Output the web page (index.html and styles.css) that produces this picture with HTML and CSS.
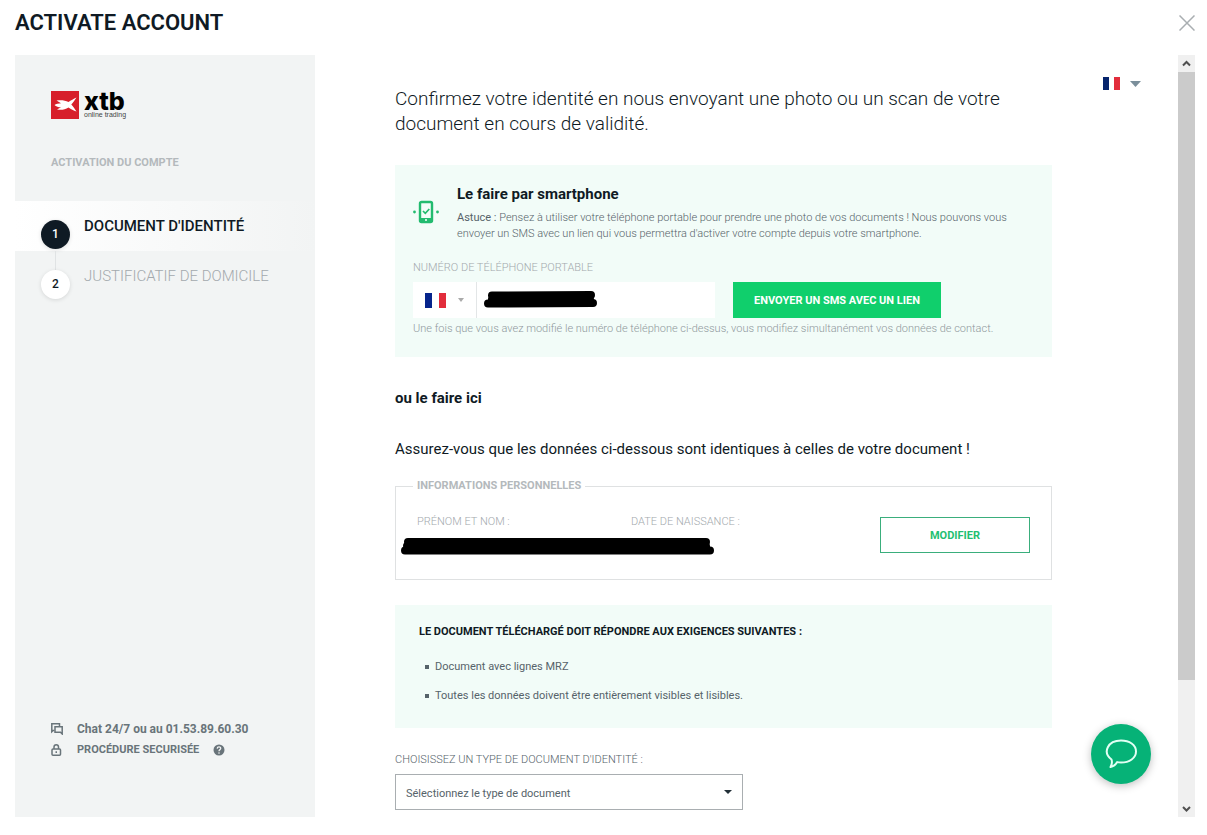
FILE: index.html
```html
<!DOCTYPE html>
<html lang="fr">
<head>
  <meta charset="UTF-8" />
  <meta name="viewport" content="width=device-width, initial-scale=1.0"/>
  <title>Activate account</title>
  <link rel="stylesheet" href="styles.css">
</head>
<body>
  <header class="top">
    <h1>ACTIVATE ACCOUNT</h1>
    <button type="button" class="close" aria-label="Fermer">
      <svg width="16" height="16" viewBox="0 0 16 16"><path d="M.5.5l15 15M15.5.5l-15 15" stroke="#a9aeb1" stroke-width="1.5" fill="none"/></svg>
    </button>
  </header>

  <div class="layout">
    <aside class="sidebar">
      <div class="logo">
        <svg width="28" height="28" viewBox="0 0 28 28">
          <rect width="28" height="28" fill="#d71f2b"/>
          <path d="M5.500 9.500C10 8.800 14 9.200 17.500 11C20 9.500 22.500 7.800 25.500 6.500C24 9 22 11.500 20.300 13.500C22 15.500 24 18 25.500 20.500C22.500 19.500 20 18.200 17.500 16.500C14 18.800 10 19.300 6 18.500L10 16.300C7.500 16.300 5 15.500 3.500 14C5 13 7.500 12.300 10 12.200Z" fill="#fff"/>
        </svg>
        <div class="logo-text">
          <strong>xtb</strong>
          <span>online trading</span>
        </div>
      </div>
      <h2 class="side-title">ACTIVATION DU COMPTE</h2>

      <ol class="steps">
        <li class="step active"><span class="num">1</span><span class="step-name">DOCUMENT D'IDENTITÉ</span></li>
        <li class="step"><span class="num">2</span><span class="step-name">JUSTIFICATIF DE DOMICILE</span></li>
      </ol>

      <div class="help">
        <p class="help-chat">
          <svg width="12" height="12" viewBox="0 0 12 12" fill="none" stroke="#69747a" stroke-width="1.500"><path d="M3.500 7.500H2L.8 8.700V.8H8.500V3"/><path d="M4 3.700H11.200V11L9.500 9.300H4Z"/></svg>
          <span>Chat 24/7 ou au 01.53.89.60.30</span>
        </p>
        <p>
          <svg width="12" height="12" viewBox="0 0 12 12" fill="none" stroke="#69747a" stroke-width="1.500"><rect x="1" y="5" width="8.500" height="6.200" rx="1"/><path d="M3 5V3a2.250 2.250 0 0 1 4.500 0V5"/><path d="M5.250 7.300V9"/></svg>
          <span>PROCÉDURE SECURISÉE</span>
          <svg width="12" height="12" viewBox="0 0 12 12"><circle cx="6" cy="6" r="5.500" fill="#69747a"/><path d="M4.200 4.600C4.300 2.300 7.900 2.500 7.700 4.500C7.600 5.700 6 5.600 6 7.200" fill="none" stroke="#f2f4f4" stroke-width="1.300"/><circle cx="6" cy="9" r=".8" fill="#f2f4f4"/></svg>
        </p>
      </div>
    </aside>

    <main class="content">
      <form class="form">
        <p class="intro">Confirmez votre identité en nous envoyant une photo ou un scan de votre document en cours de validité.</p>

        <section class="box phone-box">
          <div class="phone-head">
            <svg width="26" height="24" viewBox="0 0 26 24">
              <rect x="7" y="2" width="12" height="20" rx="1.500" fill="none" stroke="#22bb6f" stroke-width="2.400"/>
              <path d="M7 18h12v4H7z" fill="#22bb6f"/>
              <path d="M10 11l2.300 2.300L16.300 9" fill="none" stroke="#22bb6f" stroke-width="1.700"/>
              <circle cx="13" cy="20" r="1" fill="#fff"/>
              <circle cx="1.500" cy="12" r="1.400" fill="#22bb6f"/>
              <circle cx="24.500" cy="12" r="1.400" fill="#22bb6f"/>
            </svg>
            <div>
              <h3>Le faire par smartphone</h3>
              <p class="tip"><span>Astuce :</span> Pensez à utiliser votre téléphone portable pour prendre une photo de vos documents ! Nous pouvons vous envoyer un SMS avec un lien qui vous permettra d'activer votre compte depuis votre smartphone.</p>
            </div>
          </div>
          <label class="label" for="phone">NUMÉRO DE TÉLÉPHONE PORTABLE</label>
          <div class="phone-row">
            <div class="phone-field">
              <button type="button" class="country" aria-label="Indicatif du pays" aria-haspopup="listbox">
                <svg width="21" height="15" viewBox="0 0 21 15"><path fill="#06248c" d="M0 0h7v15H0z"/><path fill="#fff" d="M7 0h7v15H7z"/><path fill="#e22d3c" d="M14 0h7v15h-7z"/></svg>
                <svg width="6" height="4" viewBox="0 0 6 4"><path d="M0 0h6L3 4z" fill="#aaa"/></svg>
              </button>
              <input type="tel" id="phone" />
              <svg class="mask" width="113" height="17" viewBox="0 0 113 17" fill="none" stroke="#000" stroke-width="8" stroke-linecap="round"><path d="M8 4.500L107 4M4 12.500L109 12M8 8H106"/></svg>
            </div>
            <button type="submit" class="btn">ENVOYER UN SMS AVEC UN LIEN</button>
          </div>
          <p class="hint">Une fois que vous avez modifié le numéro de téléphone ci-dessus, vous modifiez simultanément vos données de contact.</p>
        </section>

        <h3 class="or">ou le faire ici</h3>
        <p class="check">Assurez-vous que les données ci-dessous sont identiques à celles de votre document !</p>

        <fieldset class="infos">
          <legend>INFORMATIONS PERSONNELLES</legend>
          <div class="infos-row">
            <span class="label">PRÉNOM ET NOM :</span>
            <span class="label">DATE DE NAISSANCE :</span>
            <button type="button" class="btn outline">MODIFIER</button>
            <svg class="mask" width="313" height="17" viewBox="0 0 313 17" fill="none" stroke="#000" stroke-width="8" stroke-linecap="round"><path d="M7 4H305M4 12.500H309M6 8H305"/></svg>
          </div>
        </fieldset>

        <section class="box rules">
          <h4>LE DOCUMENT TÉLÉCHARGÉ DOIT RÉPONDRE AUX EXIGENCES SUIVANTES :</h4>
          <ul>
            <li>Document avec lignes MRZ</li>
            <li>Toutes les données doivent être entièrement visibles et lisibles.</li>
          </ul>
        </section>

        <label class="label dark" for="doctype">CHOISISSEZ UN TYPE DE DOCUMENT D'IDENTITÉ :</label>
        <div class="select">
          <select id="doctype">
            <option>Sélectionnez le type de document</option>
          </select>
          <svg width="8" height="4" viewBox="0 0 8 4"><path d="M0 0h8L4 4z" fill="#222f37"/></svg>
        </div>
      </form>

      <button type="button" class="lang" aria-label="Langue" aria-haspopup="listbox">
        <svg width="17" height="13" viewBox="0 0 17 13"><path fill="#06246c" d="M0 0h6v13H0z"/><path fill="#fff" d="M6 0h5v13H6z"/><path fill="#e22d3c" d="M11 0h6v13h-6z"/></svg>
        <svg width="11" height="6" viewBox="0 0 11 6"><path d="M0 0h11L5.500 6z" fill="#7b8f9b"/></svg>
      </button>
    </main>

    <div class="scrollbar">
      <svg width="17" height="17" viewBox="0 0 17 17"><path d="M5 10.500L8.500 7L12 10.500" fill="none" stroke="#505050" stroke-width="2"/></svg>
      <div class="track"><div class="thumb"></div></div>
      <svg width="17" height="17" viewBox="0 0 17 17"><path d="M5 7L8.500 10.500L12 7" fill="none" stroke="#505050" stroke-width="2"/></svg>
    </div>
  </div>

  <button type="button" class="chat" aria-label="Chat">
    <svg width="34" height="30" viewBox="0 0 34 30"><path d="M7.500 20.500C-2 13 4 1.500 17 1.500C25.500 1.500 32 6 32 12.500C32 19 25.500 23.500 17 23.500C15.500 23.500 14.500 23.400 13.200 23.100C11.500 26 9.500 27.500 6.500 28C8 25.500 8.300 23 7.500 20.500Z" fill="none" stroke="#e2fff4" stroke-width="2" stroke-linejoin="round"/></svg>
  </button>
</body>
</html>
```
FILE: styles.css
```css
* {
  box-sizing: border-box;
}
body {
  margin: 0;
  height: 100vh;
  padding: 0 12px 18px 15px;
  display: flex;
  flex-direction: column;
  font-family: Roboto, "Liberation Sans", sans-serif;
  font-size: 11px;
  line-height: 16px;
  color: #0f1a24;
  background: #fff;
}
h1, h2, h3, h4, p, ul, ol {
  margin: 0;
  padding: 0;
}
button, input, select {
  font-family: inherit;
  font-size: 11px;
  border: none;
  border-radius: 0;
  padding: 0;
  background: none;
}
button {
  cursor: pointer;
}
svg {
  display: block;
  flex: none;
}

.top {
  height: 55px;
  padding-bottom: 10px;
  flex: none;
  display: flex;
  align-items: center;
  justify-content: space-between;
}
h1 {
  font-size: 22px;
  line-height: 26px;
  font-weight: 600;
}
.layout {
  flex: 1;
  min-height: 0;
  display: flex;
}

/* sidebar */
.sidebar {
  width: 300px;
  flex: none;
  background: #f2f4f4;
  display: flex;
  flex-direction: column;
}
.logo {
  display: flex;
  gap: 5px;
  padding: 36px 36px 0;
}
.logo-text {
  color: #000;
}
.logo-text strong {
  display: block;
  font-family: Inter, sans-serif;
  font-size: 25px;
  line-height: 20px;
  font-weight: 800;
}
.logo-text span {
  display: block;
  font-family: "Liberation Sans", sans-serif;
  font-size: 7px;
  line-height: 8px;
  color: #444;
}
.side-title {
  padding: 36px 36px 30px;
  font-size: 11px;
  line-height: 16px;
  font-weight: 700;
  color: #b4b9bc;
}
.steps {
  list-style: none;
}
.step {
  height: 50px;
  padding: 15px 26px 0;
  display: flex;
  gap: 14px;
  font-size: 15px;
  line-height: 20px;
  font-weight: 300;
  color: #a3a9ad;
}
.step.active {
  background: linear-gradient(to right, #fff, #f2f4f4);
  font-weight: 500;
  color: #0f1a24;
}
.num {
  position: relative;
  width: 29px;
  height: 29px;
  margin-top: 4px;
  border-radius: 50%;
  background: #fff;
  box-shadow: 0 1px 4px rgba(0,0,0,0.12);
  font-size: 12px;
  line-height: 29px;
  font-weight: 500;
  text-align: center;
  color: #0f1a24;
}
.active .num {
  background: #0f1a24;
  color: #fff;
}
.active .num::after {
  content: "";
  position: absolute;
  left: 14px;
  top: 31px;
  width: 1px;
  height: 19px;
  background: #e0e3e4;
}
.help {
  margin-top: auto;
  padding: 0 36px 59px;
  font-weight: 700;
  color: #69747a;
}
.help p {
  display: flex;
  align-items: center;
  gap: 14px;
}
.help-chat {
  font-size: 12px;
}
.help p + p {
  margin-top: 5px;
}

/* content */
.content {
  flex: 1;
  min-width: 0;
  overflow: hidden;
  padding: 0 37px 0 80px;
  display: flex;
  align-items: flex-start;
  justify-content: space-between;
}
.form {
  flex: 0 1 657px;
  padding-top: 31px;
}
.intro {
  font-size: 19px;
  line-height: 25px;
  font-weight: 300;
}
.box {
  background: #f2fcf8;
}
.phone-box {
  margin-top: 29px;
  padding: 19px 18px 20px;
}
.phone-head {
  display: flex;
  gap: 18px;
  align-items: flex-start;
}
.phone-head svg {
  margin-top: 16px;
}
h3 {
  font-size: 15px;
  line-height: 20px;
  font-weight: 700;
}
.tip {
  margin-top: 6px;
  font-weight: 300;
  color: #56636a;
}
.tip span {
  font-weight: 400;
}
.label {
  display: block;
  font-weight: 300;
  color: #a3a9ad;
}
.phone-box .label {
  margin-top: 18px;
}
.phone-row {
  display: flex;
  gap: 18px;
  margin: 6px 0 3px;
}
.phone-field {
  position: relative;
  display: flex;
  width: 302px;
  height: 36px;
  background: #fff;
}
.country {
  width: 64px;
  border-right: 1px solid #e3e6e7;
  display: flex;
  align-items: center;
  justify-content: center;
  gap: 12px;
}
.phone-field input {
  flex: 1;
  min-width: 0;
  padding: 0 8px;
}
.mask {
  position: absolute;
}
.phone-field .mask {
  left: 71px;
  top: 9px;
}
.btn {
  height: 36px;
  padding: 0 21px;
  background: #10cf6c;
  color: #fff;
  font-weight: 700;
}
.hint {
  font-weight: 300;
  color: #8f989c;
}
.or {
  margin-top: 31px;
}
.check {
  margin-top: 31px;
  font-size: 15px;
  line-height: 20px;
}
.infos {
  margin: 19px 0 0;
  padding: 20px 21px 26px 17px;
  border: 1px solid #dfe1e2;
  min-width: 0;
}
.infos legend {
  padding: 0 4px;
  font-weight: 700;
  color: #b4b9bc;
}
.infos-row {
  position: relative;
  display: grid;
  grid-template-columns: 214px 1fr 150px;
  padding-left: 4px;
}
.infos .btn {
  margin-top: 3px;
}
.infos .mask {
  left: -12px;
  top: 24px;
}
.outline {
  background: #fff;
  border: 1px solid #3aae7c;
  color: #1fc071;
}
.rules {
  margin-top: 25px;
  padding: 19px 24px 24px;
}
.rules h4 {
  font-size: 11px;
  font-weight: 700;
}
.rules ul {
  margin-top: 19px;
  list-style: none;
  color: #56636a;
}
.rules li {
  display: flex;
  align-items: center;
  gap: 6px;
  padding-left: 6px;
}
.rules li::before {
  content: "";
  width: 4px;
  height: 4px;
  background: #56636a;
}
.rules li + li {
  margin-top: 13px;
}
.label.dark {
  margin: 24px 0 6px;
  color: #56636a;
}
.select {
  position: relative;
  width: 348px;
}
.select select {
  display: block;
  width: 100%;
  height: 36px;
  padding: 2px 10px 0;
  appearance: none;
  border: 1px solid #a9aeb1;
  background: #fff;
  color: #56636a;
}
.select svg {
  position: absolute;
  right: 11px;
  top: 16px;
}
.lang {
  display: flex;
  align-items: center;
  gap: 10px;
  margin-top: 22px;
}

.scrollbar {
  width: 17px;
  display: flex;
  flex-direction: column;
  background: #f0f0f0;
}
.track {
  flex: 1;
}
.thumb {
  height: 83.5%;
  background: #cbcbcb;
}

.chat {
  position: fixed;
  right: 56px;
  bottom: 51px;
  width: 60px;
  height: 60px;
  border-radius: 50%;
  background: #06b277;
  box-shadow: 0 2px 8px rgba(0,0,0,0.25);
  display: flex;
  align-items: center;
  justify-content: center;
}
```
